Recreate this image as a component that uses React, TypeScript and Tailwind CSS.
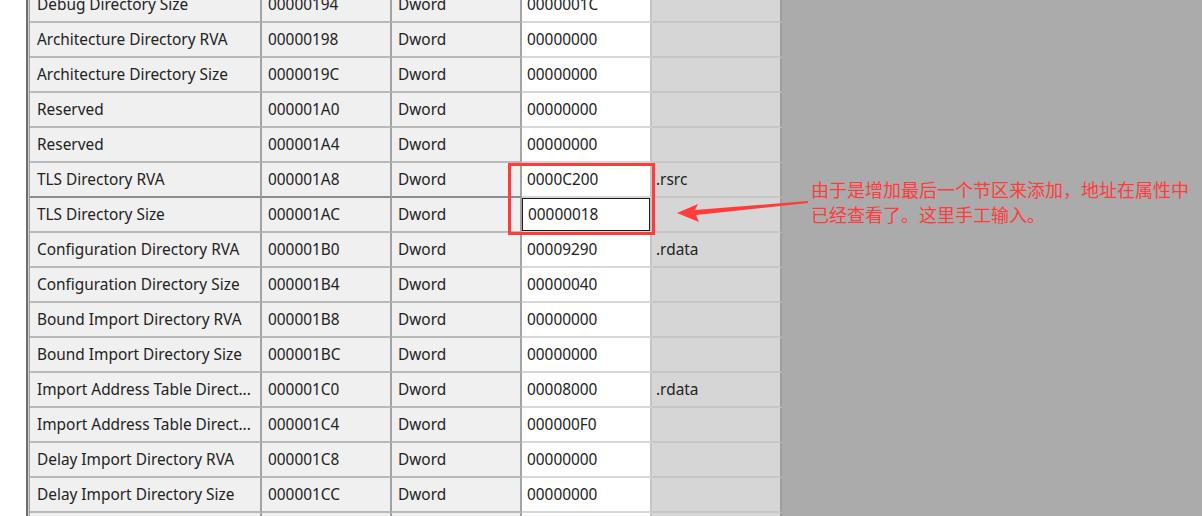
import React from "react";

type Row = { name: string; offset: string; value: string; section?: string };

const rows: Row[] = [
  { name: "Debug Directory Size", offset: "00000194", value: "0000001C" },
  { name: "Architecture Directory RVA", offset: "00000198", value: "00000000" },
  { name: "Architecture Directory Size", offset: "0000019C", value: "00000000" },
  { name: "Reserved", offset: "000001A0", value: "00000000" },
  { name: "Reserved", offset: "000001A4", value: "00000000" },
  { name: "TLS Directory RVA", offset: "000001A8", value: "0000C200", section: ".rsrc" },
  { name: "TLS Directory Size", offset: "000001AC", value: "00000018" },
  { name: "Configuration Directory RVA", offset: "000001B0", value: "00009290", section: ".rdata" },
  { name: "Configuration Directory Size", offset: "000001B4", value: "00000040" },
  { name: "Bound Import Directory RVA", offset: "000001B8", value: "00000000" },
  { name: "Bound Import Directory Size", offset: "000001BC", value: "00000000" },
  { name: "Import Address Table Direct...", offset: "000001C0", value: "00008000", section: ".rdata" },
  { name: "Import Address Table Direct...", offset: "000001C4", value: "000000F0" },
  { name: "Delay Import Directory RVA", offset: "000001C8", value: "00000000" },
  { name: "Delay Import Directory Size", offset: "000001CC", value: "00000000" },
  { name: "", offset: "", value: "" },
];

const SELECTED = 6;

function TableRow({ row, index }: { row: Row; index: number }) {
  const selected = index === SELECTED;
  // the line above the selected row is a bit darker
  const lineDark = index === SELECTED - 1;
  const grey = lineDark ? "border-b-[#8c8c8c]" : "border-b-[#b9b9b9]";
  return (
    <div className="flex h-[35px] shrink-0">
      <div className={`w-[232px] flex items-center pl-[7px] bg-[#f0f0f0] border-r-2 border-r-[#a3a3a3] border-b-2 ${grey}`}>
        {row.name}
      </div>
      <div className={`w-[130px] flex items-center pl-[6px] bg-[#f0f0f0] border-r-2 border-r-[#a3a3a3] border-b-2 ${grey}`}>
        {row.offset}
      </div>
      <div className={`w-[130px] flex items-center pl-[6px] bg-[#f0f0f0] border-r-2 border-r-[#a3a3a3] border-b-2 ${grey}`}>
        {row.offset ? "Dword" : ""}
      </div>
      <div className="w-[130px] flex bg-white border-r-2 border-r-[#c4c4c4] border-b-2 border-b-[#d8d8d8]">
        <div className={`flex-1 flex items-center pl-[5px] ${selected ? "border border-[#1a1a1a]" : ""}`}>
          {row.value}
        </div>
      </div>
      <div className="w-[130px] flex items-center pl-[4px] bg-[#d6d6d6] border-r-2 border-r-[#9e9e9e] border-b-2 border-b-[#c6c6c6]">
        {row.section ?? ""}
      </div>
    </div>
  );
}

export default function App() {
  return (
    <div
      className="relative w-[1202px] h-[516px] overflow-hidden flex bg-[#ababab] text-[15.4px] text-[#222]"
      style={{ fontFamily: '"Noto Sans", "Liberation Sans", sans-serif' }}
    >
      <div className="w-[26px] bg-white" />
      <div className="w-[2px] bg-[#6e6e6e]" />
      <div className="w-[1px] bg-[#cfcfcf]" />
      <div className="w-[1px] bg-[#a0a0a0]" />
      <div className="flex flex-col -mt-[12px]">
        {rows.map((r, i) => (
          <TableRow key={i} row={r} index={i} />
        ))}
      </div>
      <div className="flex-1" />

      {/* red highlight box */}
      <div className="absolute left-[508px] top-[163px] w-[147px] h-[72px] border-[3px] border-[#ff3b3b]" />

      {/* arrow */}
      <svg className="absolute left-[670px] top-[195px]" width="145" height="32" viewBox="0 0 145 32">
        <polygon points="7,18 28,9 25,15 138,6 138,8 26,20 29,27" fill="#ff3b3b" />
      </svg>

      <div
        className="absolute left-[811px] top-[177px] text-[18px] leading-[25px] text-[#ff3b3b]"
        style={{ fontFamily: '"Noto Sans CJK SC", "Noto Sans", sans-serif' }}
      >
        <div>由于是增加最后一个节区来添加，地址在属性中</div>
        <div>已经查看了。这里手工输入。</div>
      </div>
    </div>
  );
}
